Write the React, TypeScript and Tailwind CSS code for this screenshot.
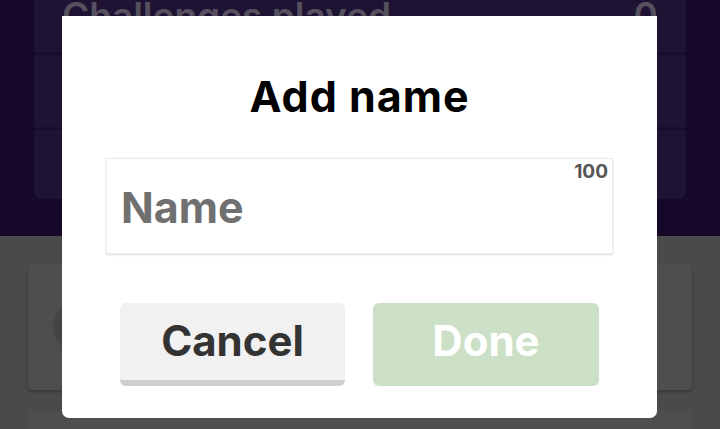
import React from 'react';

const font = { fontFamily: 'Inter, "Noto Sans", sans-serif' };

export default function App() {
  return (
    <div className="relative w-[720px] h-[429px] overflow-hidden bg-[#4a4a4a]" style={font}>
      {/* Purple stats area */}
      <div className="h-[236px] bg-[#160828] px-[34px]">
        <div className="h-[199px] rounded-b-lg bg-[#1e1332] flex flex-col overflow-hidden">
          <div className="h-[52px] flex items-start justify-between px-7 text-[#55505e] font-semibold text-[37px] leading-none">
            <span className="-mt-[3px]">Challenges played</span>
            <span className="-mt-[3px]">0</span>
          </div>
          <div className="h-[75px] bg-[#1e1332] border-t-[3px] border-[#190c2c]" />
          <div className="flex-1 bg-[#1e1332] border-t-[3px] border-[#190c2c]" />
        </div>
      </div>

      {/* Dimmed list area */}
      <div className="px-[28px] pt-[28px] flex flex-col gap-[21px]">
        <div className="h-[126px] rounded bg-[#4e4e4e] shadow-[0_2px_3px_rgba(0,0,0,0.25)] flex items-center px-[25px]">
          <div className="w-[52px] h-[52px] rounded-full bg-[#444444]" />
        </div>
        <div className="h-[60px] rounded bg-[#4e4e4e]" />
      </div>

      {/* Modal */}
      <div className="absolute left-[62px] top-[16px] w-[595px] h-[402px] bg-white rounded-b-[7px] flex flex-col items-center">
        <h2 className="mt-[59px] text-[43px] leading-none font-bold text-black tracking-[1px]">Add name</h2>
        <div className="relative mt-[40px] w-[507px] h-[96px] bg-white border border-[#ececec] shadow-[0_1px_2px_rgba(0,0,0,0.15)] flex items-center px-[14px]">
          <span className="absolute right-[4px] top-[3px] text-[19px] font-bold text-[#555555] leading-none">100</span>
          <span className="text-[43px] font-bold text-[#707070] leading-none mt-[3px]">Name</span>
        </div>
        <div className="mt-[49px] flex gap-[28px]">
          <button className="w-[225px] h-[83px] rounded-[6px] bg-[#f1f1f1] border-b-[6px] border-[#cfcfcf] text-[#333333] text-[42px] font-bold leading-none pb-[2px]">
            Cancel
          </button>
          <button className="w-[226px] h-[83px] rounded-[6px] bg-[#cce0c7] text-white text-[42px] font-bold leading-none pb-[8px]">
            Done
          </button>
        </div>
      </div>
    </div>
  );
}
